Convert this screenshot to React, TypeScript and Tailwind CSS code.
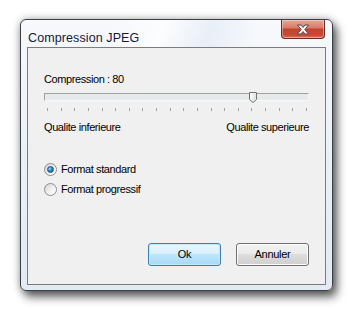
const font = { fontFamily: '"Liberation Sans", Arial, sans-serif' };

const ticks = Array.from({ length: 20 }, (_, i) => i);

function Radio({ checked, label }: { checked?: boolean; label: string }) {
  return (
    <label className="flex items-center gap-[4px]">
      <span className="flex h-[13px] w-[13px] items-center justify-center rounded-full border border-[#8b8d8f] bg-[linear-gradient(135deg,#d2d3d4_0%,#f4f4f4_60%,#ffffff_100%)]">
        {checked && (
          <span className="h-[7px] w-[7px] rounded-full border border-[#1b4f82] bg-[radial-gradient(circle_at_35%_35%,#a8dcfb_0%,#2b8ad6_45%,#0f4f93_100%)]" />
        )}
      </span>
      <span className="text-[11px] leading-[13px] tracking-[-0.4px] text-black">{label}</span>
    </label>
  );
}

export default function App() {
  return (
    <div className="min-h-screen bg-white pl-[20px] pt-[19px]" style={font}>
      <div className="relative flex h-[272px] w-[313px] flex-col rounded-[6px] border border-[#3b4048] bg-[linear-gradient(180deg,#f7f9fc_0%,#edf2f8_40%,#e3eaf3_100%)] shadow-[4px_6px_10px_rgba(0,0,0,0.6),0_0_8px_rgba(0,0,0,0.3)]">
        {/* Title bar */}
        <div className="h-[27px] rounded-t-[5px] bg-[linear-gradient(110deg,rgba(255,255,255,0)_30%,rgba(255,255,255,0.7)_45%,rgba(220,230,242,0.5)_60%,rgba(255,255,255,0)_75%)] pl-[7px] pt-[5px]">
          <span className="text-[12.5px] leading-[15px] tracking-[0.1px] text-[#14183a]">Compression JPEG</span>
        </div>
        <button className="absolute right-[7px] top-0 flex h-[19px] w-[44px] items-center justify-center rounded-b-[4px] border border-t-0 border-[#6b2a22] bg-[linear-gradient(180deg,#e9a595_0%,#d67a66_45%,#c2412c_50%,#c94b35_85%,#dd7a60_100%)] shadow-[inset_0_0_0_1px_rgba(255,255,255,0.35)]">
          <svg width="14" height="11" viewBox="0 0 14 11">
            <path
              d="M1.5 1 H5 L7 3.5 L9 1 H12.5 L8.8 5.5 L12.5 10 H9 L7 7.5 L5 10 H1.5 L5.2 5.5 Z"
              fill="#ffffff"
              stroke="#4b4b4b"
              strokeWidth="1"
              strokeLinejoin="round"
            />
          </svg>
        </button>

        {/* Client area */}
        <div className="mx-[6px] mb-[5px] flex flex-1 flex-col border border-[#7c7c7c] bg-[#f0f0f0] px-[16px] pt-[25px] pb-[18px] text-black">
          <div className="text-[11px] leading-[13px] tracking-[-0.4px]">Compression : 80</div>

          <div className="relative mt-[7px] h-[8px] border border-t-[#a0a0a0] border-l-[#a0a0a0] border-b-[#f8f8f8] border-r-[#f8f8f8] bg-[#e7eaea]">
            <svg className="absolute left-[204px] top-[-2px]" width="8" height="11" viewBox="0 0 8 11">
              <path
                d="M0.5 0.5 H7.5 V7.5 L4 10.5 L0.5 7.5 Z"
                fill="#f3f3f3"
                stroke="#707070"
                strokeWidth="1"
              />
              <path d="M1.5 1.5 H6.5 V7 L4 9.2 L1.5 7 Z" fill="url(#g)" />
              <defs>
                <linearGradient id="g" x1="0" y1="0" x2="1" y2="0">
                  <stop offset="0" stopColor="#ffffff" />
                  <stop offset="1" stopColor="#dcdcdc" />
                </linearGradient>
              </defs>
            </svg>
          </div>

          <div className="mt-[7px] flex justify-between pl-[3px] pr-[2px]">
            {ticks.map((t) => (
              <span key={t} className="h-[3px] w-[1px] bg-[#a3a3a3]" />
            ))}
          </div>

          <div className="mt-[10px] flex justify-between text-[11px] leading-[13px] tracking-[-0.4px]">
            <span>Qualite inferieure</span>
            <span>Qualite superieure</span>
          </div>

          <div className="mt-[29px] flex flex-col gap-[7px]">
            <Radio checked label="Format standard" />
            <Radio label="Format progressif" />
          </div>

          <div className="mt-auto flex justify-end gap-[15px] text-[11px] tracking-[-0.3px]">
            <button className="h-[23px] w-[73px] rounded-[3px] border border-[#3c7fb1] bg-[linear-gradient(180deg,#eaf6fd_0%,#d9f0fc_45%,#bee6fd_50%,#a7d9f5_100%)] shadow-[inset_0_0_0_1px_#c4e8fb]">
              Ok
            </button>
            <button className="h-[23px] w-[73px] rounded-[3px] border border-[#707070] bg-[linear-gradient(180deg,#f2f2f2_0%,#ebebeb_45%,#dddddd_50%,#cfcfcf_100%)] shadow-[inset_0_0_0_1px_#fcfcfc]">
              Annuler
            </button>
          </div>
        </div>
      </div>
    </div>
  );
}
